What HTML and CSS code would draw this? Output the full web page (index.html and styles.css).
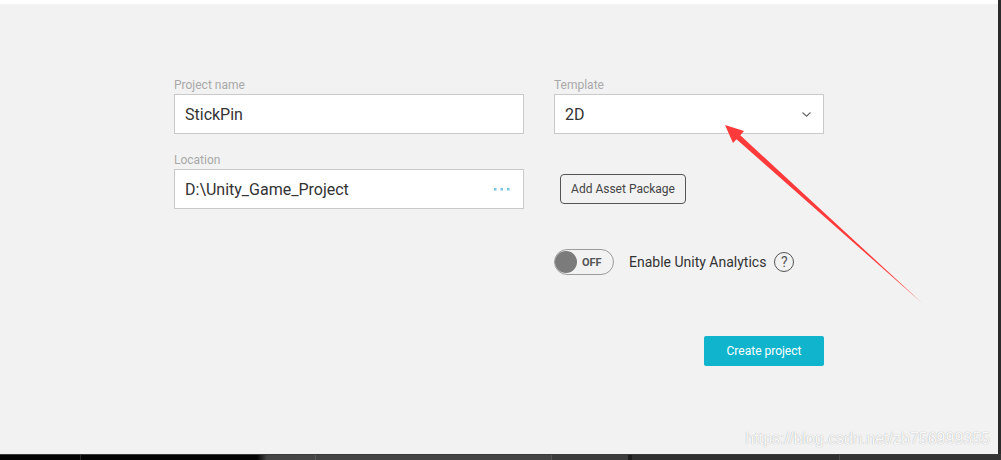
FILE: index.html
```html
<!DOCTYPE html>
<html lang="en">
<head>
<meta charset="utf-8">
<title>New Project</title>
<link rel="stylesheet" href="styles.css">
</head>
<body>
<div class="screen">
  <div class="topstrip"></div>
  <div class="edge"></div>
  <main class="content">
    <div class="form">
      <div class="col col-left">
        <div class="field">
          <label class="label">Project name</label>
          <div class="input">StickPin</div>
        </div>
        <div class="field field-next">
          <label class="label">Location</label>
          <div class="input">
            <span>D:\Unity_Game_Project</span>
            <svg class="dots" width="16" height="3" viewBox="0 0 16 3" aria-hidden="true">
              <rect x="0" y="0" width="2.5" height="2.5" fill="#74c8e2"/>
              <rect x="6.5" y="0" width="2.5" height="2.5" fill="#74c8e2"/>
              <rect x="13" y="0" width="2.5" height="2.5" fill="#74c8e2"/>
            </svg>
          </div>
        </div>
      </div>
      <div class="col col-right">
        <div class="field field-full">
          <label class="label">Template</label>
          <div class="input select">
            <span>2D</span>
            <svg class="chevron" width="9" height="5" viewBox="0 0 9 5" aria-hidden="true">
              <path d="M0.5 0.5 L4.5 4.2 L8.5 0.5" fill="none" stroke="#666" stroke-width="1.1"/>
            </svg>
          </div>
        </div>
        <button class="asset-btn">Add Asset Package</button>
        <div class="analytics">
          <div class="toggle"><span class="knob"></span><span class="toggle-text">OFF</span></div>
          <span class="analytics-text">Enable Unity Analytics</span>
          <span class="help">?</span>
        </div>
        <button class="create-btn">Create project</button>
      </div>
    </div>
    <div class="watermark">https://blog.csdn.net/zb756999355</div>
  </main>
  <div class="taskbar"></div>
  <svg class="annotation" width="1001" height="460" viewBox="0 0 1001 460" aria-hidden="true">
    <polygon points="725,125 744,131 740.3,135.3 922,303 736.5,139.2 733,143" fill="#ff3a3a"/>
  </svg>
</div>
</body>
</html>
```

FILE: styles.css
```css
* {
  box-sizing: border-box;
}

html, body {
  margin: 0;
  padding: 0;
}

body {
  font-family: Roboto, "Liberation Sans", Arial, sans-serif;
  background: #f2f2f2;
}

.screen {
  position: relative;
  width: 1001px;
  height: 460px;
  display: grid;
  grid-template-columns: 1fr 3px;
  grid-template-rows: 4px 1fr 6px;
  overflow: hidden;
}

.topstrip {
  grid-column: 1;
  grid-row: 1;
  background: #ffffff;
}

.edge {
  grid-column: 2;
  grid-row: 1 / 3;
  background: #2b2b2b;
}

.content {
  grid-column: 1;
  grid-row: 2;
  position: relative;
  background: #f2f2f2;
  padding: 74px 0 0 174px;
}

.taskbar {
  grid-column: 1 / 3;
  grid-row: 3;
  border-top: 1px solid #3a3a3a;
  background: linear-gradient(to right,
    #040404 0, #040404 80px, #2a2a2a 80px, #2a2a2a 81px,
    #040404 81px, #040404 257px, #444 267px, #464646 315px,
    #5a5a5a 315px, #5a5a5a 316px, #444 316px, #444 551px,
    #555 551px, #555 552px, #3c3c3c 552px, #3c3c3c 628px,
    #1c1c1c 628px, #1c1c1c 632px, #2f2f2f 632px, #2f2f2f 839px,
    #484848 839px, #484848 840px, #343434 840px);
}

/* form layout */
.form {
  display: flex;
  gap: 30px;
}

.col-left {
  width: 350px;
}

.col-right {
  width: 270px;
  display: flex;
  flex-direction: column;
  align-items: flex-start;
}

.field {
  display: flex;
  flex-direction: column;
}

.field-full {
  align-self: stretch;
}

.field-next {
  margin-top: 19px;
}

.label {
  font-size: 12px;
  line-height: 14px;
  color: #a9a9a9;
  margin-bottom: 2px;
}

.input {
  height: 40px;
  background: #ffffff;
  border: 1px solid #c9c9c9;
  display: flex;
  align-items: center;
  padding: 0 13px 0 10px;
  font-size: 16px;
  color: #333333;
}

.dots {
  margin-left: auto;
}

.select {
  padding-right: 12px;
}

.chevron {
  margin-left: auto;
}

/* buttons */
.asset-btn {
  margin: 40px 0 0 6px;
  width: 126px;
  height: 30px;
  padding: 0;
  border: 1px solid #555555;
  border-radius: 4px;
  background: transparent;
  font-family: inherit;
  font-size: 12px;
  color: #444444;
}

.analytics {
  margin-top: 45px;
  display: flex;
  align-items: center;
}

.toggle {
  width: 60px;
  height: 26px;
  border: 1px solid #9c9c9c;
  border-radius: 13px;
  display: flex;
  align-items: center;
  padding-left: 0;
}

.knob {
  width: 22px;
  height: 22px;
  border-radius: 50%;
  background: #7b7b7b;
}

.toggle-text {
  margin-left: 5px;
  font-size: 11px;
  font-weight: 700;
  color: #555555;
}

.analytics-text {
  margin-left: 15px;
  font-size: 14px;
  color: #333333;
}

.help {
  margin-left: 8px;
  width: 20px;
  height: 20px;
  border: 1px solid #555555;
  border-radius: 50%;
  display: flex;
  align-items: center;
  justify-content: center;
  font-size: 14px;
  color: #555555;
}

.create-btn {
  margin-top: 61px;
  align-self: flex-end;
  width: 120px;
  height: 30px;
  padding: 0;
  border: none;
  border-radius: 2px;
  background: #10b5cd;
  font-family: inherit;
  font-size: 12px;
  color: #ffffff;
}

/* blog watermark stamped over the corner */
.watermark {
  position: absolute;
  right: 8px;
  bottom: 7px;
  font-family: "Liberation Sans", Arial, sans-serif;
  font-size: 16px;
  line-height: 16px;
  color: rgba(255, 255, 255, 0.95);
  text-shadow: 0 0 1px rgba(0, 0, 0, 0.35);
}

/* red pointer drawn on top of the dialog */
.annotation {
  position: absolute;
  left: 0;
  top: 0;
  pointer-events: none;
}
```
